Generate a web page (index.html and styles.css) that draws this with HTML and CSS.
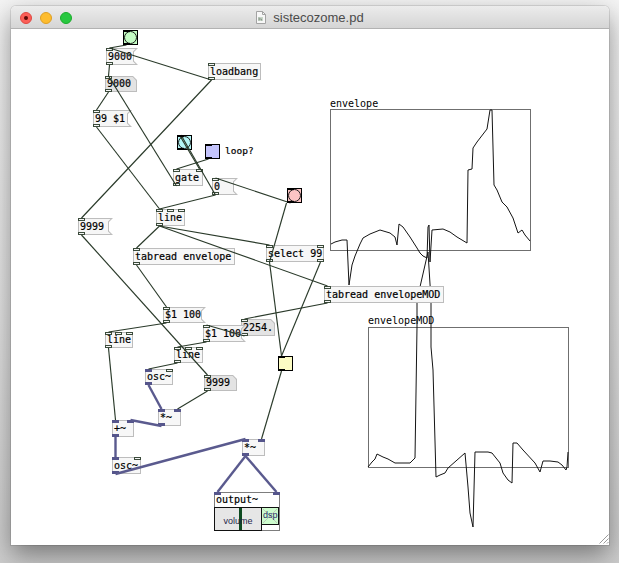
FILE: index.html
```html
<!DOCTYPE html>
<html lang="en">
<head>
<meta charset="utf-8">
<title>sistecozome.pd</title>
<link rel="stylesheet" href="styles.css">
</head>
<body>
<div class="window">
  <header class="titlebar">
    <div class="lights"><span class="light close"></span><span class="light min"></span><span class="light max"></span></div>
    <div class="title">
      <svg class="docicon" width="10" height="13" viewBox="0 0 10 13"><path d="M0.5 0.5h6l3 3v9h-9z" fill="#f7f7f7" stroke="#a3a3a3"/><path d="M6.5 0.5v3h3" fill="none" stroke="#a3a3a3"/><rect x="2" y="6" width="5" height="4" fill="#c9d6c9"/><path d="M3 6.5v3M3 8h2.5v1.5" stroke="#7e8c7e" fill="none" stroke-width="0.8"/></svg>
      <span>sistecozome.pd</span>
    </div>
    <div></div>
  </header>
  <main class="canvas">
    <svg class="layer graphs" width="598" height="516" viewBox="11 29 598 516">
      <rect class="gbox" x="330.5" y="109.5" width="200" height="141"/>
      <polyline class="curve" points="331,244 335,242 342,240 347,240 349,285 352,265 355,256 360,244 363,238 370,234 380,230 390,233 395,237 397,245 399,224 403,227 410,237 417,248 420,253 423,256 427,258 428,227 429,225 430,262 432,230 443,229 450,232 457,237 467,243 468,170 472,169 473,148 477,142 487,129 490,110 492,110 494,185 497,190 502,202 507,207 513,218 518,233 522,230 525,235 530,241"/>
      <text class="glabel" x="330" y="107">envelope</text>
      <rect class="gbox" x="368.5" y="327.5" width="200" height="140"/>
      <text class="glabel" x="368" y="324">envelopeMOD</text>
      <polyline class="curve" points="368,467 372,462 375,459 377,454 383,457 388,459 395,463 410,463 415,458 417,327 417,300 428,252 431,300 431,347 433,370 436,477 440,475 445,473 448,468 465,453 468,487 470,513 473,527 475,452 488,452 492,453 500,463 503,473 508,480 512,483 513,443 517,443 523,450 535,463 540,472 543,461 550,461 558,462 562,465 566,470 567,467 568,452"/>
    </svg>

    <div class="bng c-green n-bng1"><i class="mk top"></i><i class="mk bot"></i></div>
    <div class="msg n-msg9000">9000<i class="io in l"></i><i class="io out l"></i></div>
    <div class="atom h16 n-atom9000">9000<i class="io in l"></i><i class="io out l"></i></div>
    <div class="obj n-loadbang">loadbang<i class="io in l"></i><i class="io out l"></i></div>
    <div class="msg n-msg99">99 $1<i class="io in l"></i><i class="io out l"></i></div>
    <div class="bng c-cyan n-bng2"><i class="mk top"></i><i class="mk bot"></i></div>
    <div class="tgl c-lav n-tgl1"><i class="mk top"></i><i class="mk bot"></i></div>
    <div class="iemlabel n-looplabel">loop?</div>
    <div class="obj n-gate">gate<i class="io in l"></i><i class="io in r"></i><i class="io out l"></i></div>
    <div class="msg n-msg0">0<i class="io in l"></i><i class="io out l"></i></div>
    <div class="bng c-pink n-bng3"><i class="mk top"></i><i class="mk bot"></i></div>
    <div class="msg n-msg9999">9999<i class="io in l"></i><i class="io out l"></i></div>
    <div class="obj n-line1">line<i class="io in l"></i><i class="io in m"></i><i class="io in r"></i><i class="io out l"></i></div>
    <div class="obj n-tabenv">tabread envelope<i class="io in l"></i><i class="io out l"></i></div>
    <div class="obj n-sel">select 99<i class="io in l"></i><i class="io in r"></i><i class="io out l"></i><i class="io out r"></i></div>
    <div class="obj n-tabmod">tabread envelopeMOD<i class="io in l"></i><i class="io out l"></i></div>
    <div class="msg h16 n-msg100a">$1 100<i class="io in l"></i><i class="io out l"></i></div>
    <div class="atom n-atom2254">2254.<i class="io in l"></i><i class="io out l"></i></div>
    <div class="msg n-msg100b">$1 100<i class="io in l"></i><i class="io out l"></i></div>
    <div class="obj h16 n-line2">line<i class="io in l"></i><i class="io in m"></i><i class="io in r"></i><i class="io out l"></i></div>
    <div class="obj h16 n-line3">line<i class="io in l"></i><i class="io in m"></i><i class="io in r"></i><i class="io out l"></i></div>
    <div class="obj h16 n-osc1">osc~<i class="io in l sig"></i><i class="io in r"></i><i class="io out l sig"></i></div>
    <div class="atom h16 n-atom9999">9999<i class="io in l"></i><i class="io out l"></i></div>
    <div class="tgl c-yel n-tgl2"><i class="mk top"></i><i class="mk bot"></i></div>
    <div class="obj n-mul1">*~<i class="io in l sig"></i><i class="io in r sig"></i><i class="io out l sig"></i></div>
    <div class="obj n-add">+~<i class="io in l sig"></i><i class="io in r sig"></i><i class="io out l sig"></i></div>
    <div class="obj n-mul2">*~<i class="io in l sig"></i><i class="io in r sig"></i><i class="io out l sig"></i></div>
    <div class="obj n-osc2">osc~<i class="io in l sig"></i><i class="io in r"></i><i class="io out l sig"></i></div>

    <div class="gop n-output">
      <div class="gop-name">output~</div>
      <div class="gop-row">
        <div class="vol"><span class="knob"></span><span class="vol-label">volume</span></div>
        <div class="dsp-col">
          <div class="dsp">
            <svg class="dsp-x" width="16" height="16" viewBox="0 0 16 16"><path d="M1 1L15 15M15 1L1 15" stroke="#b9c9b9" stroke-width="1"/></svg>
            <span class="dsp-label">dsp</span>
          </div>
        </div>
      </div>
      <i class="io in l sig"></i><i class="io in r sig"></i>
    </div>

    <svg class="layer wires" width="598" height="516" viewBox="11 29 598 516">
      <g class="ctl">
        <path d="M126.5 45L109.5 48"/>
        <path d="M211.5 80L109.5 48"/>
        <path d="M109.5 65L108.5 76"/>
        <path d="M108.5 92L96.5 110"/>
        <path d="M176.5 186L108.5 76"/>
        <path d="M96.5 127L159.5 209"/>
        <path d="M211.5 80L81.5 218"/>
        <path d="M81.5 235L207.5 375"/>
        <path d="M208.5 159L176.5 169"/>
        <path d="M180 136L199.5 169"/>
        <path d="M181 135L215.5 195"/>
        <path d="M290.5 203L215.5 178"/>
        <path d="M269.5 262L286.5 203"/>
        <path d="M215.5 195L159.5 209"/>
        <path d="M269.5 262L281.5 356"/>
        <path d="M320.5 262L281.5 356"/>
        <path d="M281.5 371L261.5 439"/>
        <path d="M159.5 226L136.5 248"/>
        <path d="M159.5 226L269.5 245"/>
        <path d="M159.5 226L327.5 286"/>
        <path d="M136.5 265L166.5 307"/>
        <path d="M166.5 323L108.5 332"/>
        <path d="M327.5 303L244.5 319"/>
        <path d="M244.5 336L206.5 325"/>
        <path d="M206.5 342L177.5 347"/>
        <path d="M177.5 363L148.5 369"/>
        <path d="M108.5 348L115.5 420"/>
        <path d="M207.5 391L177.5 409"/>
      </g>
      <g class="sigw">
        <path d="M148.5 385L161.5 409"/>
        <path d="M161.5 426L130.5 420"/>
        <path d="M115.5 437L115.5 457"/>
        <path d="M115.5 474L245.5 439"/>
        <path d="M245.5 456L217.5 492"/>
        <path d="M245.5 456L276.5 492"/>
      </g>
    </svg>

    <svg class="grip" width="11" height="11" viewBox="0 0 11 11"><path d="M10.5 1.5L1.5 10.5M10.5 5.5L5.5 10.5M10.5 9L9 10.5" stroke="#9b9b9b" stroke-width="1"/></svg>
  </main>
</div>
</body>
</html>
```

FILE: styles.css
```css
* { box-sizing: border-box; }
html, body { margin: 0; }
body {
  width: 619px;
  height: 563px;
  overflow: hidden;
  padding: 6px 10px 0 11px;
  background: linear-gradient(#f4f4f4 0%, #e4e4e4 55%, #cdcdcd 100%);
}

.window {
  width: 598px;
  height: 539px;
  display: flex;
  flex-direction: column;
  background: #fff;
  border-radius: 5px 5px 0 0;
  overflow: hidden;
  box-shadow: 0 0 0 1px rgba(0,0,0,0.10), 0 10px 26px rgba(0,0,0,0.42);
}

.titlebar {
  height: 23px;
  flex: none;
  display: grid;
  grid-template-columns: 1fr auto 1fr;
  align-items: center;
  background: linear-gradient(#ececec, #d5d5d5);
  border-bottom: 1px solid #b2b2b2;
}
.lights { display: flex; gap: 8px; padding-left: 9px; padding-top: 1px; }
.light {
  width: 12px; height: 12px; border-radius: 50%;
  display: flex; align-items: center; justify-content: center;
}
.light.close { background: #fc5f57; border: 1px solid #df4842; }
.light.close::after { content: ""; width: 4px; height: 4px; border-radius: 50%; background: #5c0a07; }
.light.min { background: #fdbc2e; border: 1px solid #de9f23; }
.light.max { background: #28c840; border: 1px solid #1aac2b; }

.title {
  display: flex; align-items: center; gap: 7px;
  font: 13px "Liberation Sans", Arial, sans-serif;
  color: #4b4b4b;
}
.docicon { display: block; }

.canvas {
  position: relative;
  flex: 1;
  background: #fff;
}
.layer { position: absolute; left: 0; top: 0; }
.wires { pointer-events: none; }
.gbox { fill: none; stroke: #6f6f6f; stroke-width: 1; }
.curve { fill: none; stroke: #141414; stroke-width: 1; }
.glabel { font: 10px "DejaVu Sans Mono", monospace; fill: #000; }
.ctl path { stroke: #2a3a2a; stroke-width: 1.15; fill: none; }
.sigw path { stroke: #5a5a8e; stroke-width: 2.4; fill: none; }

.grip { position: absolute; right: 0; bottom: 1px; }

/* Pd boxes */
.obj, .msg, .atom {
  position: absolute;
  height: 17px;
  border: 1px solid #bdbdbd;
  padding-left: 1px;
  font: 10px/15px "DejaVu Sans Mono", monospace;
  color: #000;
  white-space: pre;
  -webkit-text-stroke: 0.2px #000;
}
.obj { background: #f7f7f7; }
.msg, .atom { border-color: transparent; background: none; isolation: isolate; }
.msg::before, .msg::after, .atom::before, .atom::after {
  content: ""; position: absolute; z-index: -1;
}
.msg::before, .atom::before { inset: -1px; background: #bdbdbd; }
.msg::after, .atom::after { inset: 0; }
.msg::before {
  clip-path: polygon(0 0, 100% 0, calc(100% - 4px) 4px, calc(100% - 4px) calc(100% - 4px), 100% 100%, 0 100%);
}
.msg::after {
  background: #f6f6f6;
  clip-path: polygon(0 0, calc(100% - 1.4px) 0, calc(100% - 4px) 2.6px, calc(100% - 4px) calc(100% - 2.6px), calc(100% - 1.4px) 100%, 0 100%);
}
.atom::before {
  clip-path: polygon(0 0, calc(100% - 4px) 0, 100% 4px, 100% 100%, 0 100%);
}
.atom::after {
  background: #e3e3e3;
  clip-path: polygon(0 0, calc(100% - 3.4px) 0, 100% 3.4px, 100% 100%, 0 100%);
}
.h16 { height: 16px; line-height: 14px; }

.io {
  position: absolute;
  width: 7px; height: 3px;
  border: 1px solid #3b4b3b;
  background: #f5f5f5;
}
.io.in { top: -1px; }
.io.out { bottom: -1px; }
.io.l { left: -1px; }
.io.r { right: -1px; }
.io.m { left: calc(50% - 4px); }
.io.sig { background: #55558b; border-color: #55558b; }

/* iemguis */
.bng, .tgl {
  position: absolute;
  width: 15px; height: 15px;
  border: 1px solid #000;
}
.bng::before {
  content: ""; position: absolute; inset: 0;
  border: 1px solid #1a1a1a; border-radius: 50%;
  background: inherit;
}
.c-green { background: #c4fcc4; }
.c-cyan { background: #b4f6f6; }
.c-pink { background: #fcc4c4; }
.c-lav { background: #c4c4fc; }
.c-yel { background: #fcfcc4; }
.mk { position: absolute; left: -1px; width: 7px; height: 2px; background: #000; z-index: 1; }
.mk.top { top: -1px; }
.mk.bot { bottom: -1px; }
.iemlabel {
  position: absolute;
  font: 9.5px/12px "DejaVu Sans Mono", monospace;
  color: #000;
  -webkit-text-stroke: 0.2px #000;
}

/* graph-on-parent output~ */
.gop {
  position: absolute;
  border: 1px solid #7d7d7d;
  background: #fff;
  display: flex;
  flex-direction: column;
}
.gop-name { height: 14px; font: 10px/14px "DejaVu Sans Mono", monospace; padding-left: 1px; -webkit-text-stroke: 0.2px #000; }
.gop-row { display: flex; flex: 1; margin: 0 -1px -1px -1px; }
.vol {
  position: relative;
  width: 48px;
  border: 1px solid #111;
  background: #e6e6e6;
  display: flex; align-items: center; justify-content: center;
  padding-top: 3px;
}
.knob { position: absolute; left: 24px; top: 0; bottom: 0; width: 3px; background: #0d4a20; }
.vol-label { position: relative; font: 9px "Liberation Sans", Arial, sans-serif; color: #1d1d48; }
.dsp-col { flex: 1; border: 1px solid #7d7d7d; border-left: none; background: #fff; }
.dsp {
  position: relative;
  height: 18px;
  margin: -1px 0 0 0;
  border: 1px solid #111;
  border-left: none;
  background: #cdfccd;
}
.dsp-x { position: absolute; left: 0; top: 0; }
.dsp-label {
  position: absolute; left: 1px; top: 2px;
  font: 9px "Liberation Sans", Arial, sans-serif; color: #2e2e6a;
}

/* node placement on the patch canvas (canvas = page - 11,29) */
.n-bng1 { left: 112px; top: 1px; }
.n-msg9000 { left: 95px; top: 19px; width: 32px; }
.n-atom9000 { left: 94px; top: 47px; width: 32px; }
.n-loadbang { left: 197px; top: 34px; width: 53px; }
.n-msg99 { left: 82px; top: 81px; width: 39px; }
.n-bng2 { left: 166px; top: 106px; }
.n-tgl1 { left: 194px; top: 115px; }
.n-looplabel { left: 214px; top: 116px; }
.n-gate { left: 162px; top: 140px; width: 30px; }
.n-msg0 { left: 201px; top: 149px; width: 26px; }
.n-bng3 { left: 276px; top: 159px; }
.n-msg9999 { left: 67px; top: 189px; width: 35px; }
.n-line1 { left: 145px; top: 180px; width: 29px; }
.n-tabenv { left: 122px; top: 219px; width: 102px; }
.n-sel { left: 255px; top: 216px; width: 58px; }
.n-tabmod { left: 313px; top: 257px; width: 120px; }
.n-msg100a { left: 152px; top: 278px; width: 43px; }
.n-atom2254 { left: 230px; top: 290px; width: 34px; }
.n-msg100b { left: 192px; top: 296px; width: 43px; }
.n-line2 { left: 94px; top: 303px; width: 28px; }
.n-line3 { left: 163px; top: 318px; width: 29px; }
.n-osc1 { left: 134px; top: 340px; width: 28px; }
.n-atom9999 { left: 193px; top: 346px; width: 33px; }
.n-tgl2 { left: 267px; top: 327px; }
.n-mul1 { left: 147px; top: 380px; width: 23px; }
.n-add { left: 101px; top: 391px; width: 22px; }
.n-mul2 { left: 231px; top: 410px; width: 23px; }
.n-osc2 { left: 101px; top: 428px; width: 29px; }
.n-output { left: 203px; top: 463px; width: 66px; height: 39px; }
```
